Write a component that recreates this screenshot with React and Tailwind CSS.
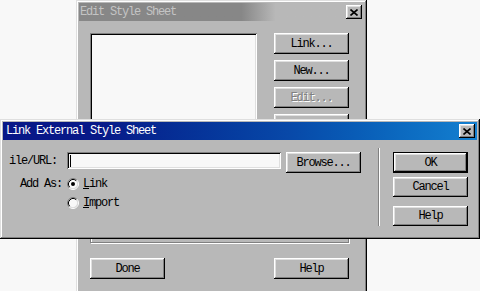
import React from "react";

const Btn = ({children, className = "", disabled, isDefault}) => (
    <div
        className={(isDefault
            ? "border border-black shadow-[inset_-1px_-1px_0_#000,inset_1px_1px_0_#fff,inset_-2px_-2px_0_#808080,inset_2px_2px_0_#dfdfdf] "
            : "shadow-[inset_-1px_-1px_0_#000,inset_1px_1px_0_#fff,inset_-2px_-2px_0_#808080,inset_2px_2px_0_#dfdfdf] ")
            + "flex items-center justify-center w-[75px] bg-[#b8b8b8] " + className}>
        <span className={disabled ? "text-[#808080] [text-shadow:1px_1px_0_#fff]" : "text-black"}>{children}</span>
    </div>
);

const CloseBtn = () => (
    <div
        className="w-[16px] h-[14px] flex items-center justify-center bg-[#b8b8b8] shadow-[inset_-1px_-1px_0_#000,inset_1px_1px_0_#fff,inset_-2px_-2px_0_#808080,inset_2px_2px_0_#dfdfdf]">
        <svg width="8" height="7" viewBox="0 0 8 7">
            <path d="M0.5 0.5L7.5 6.5M7.5 0.5L0.5 6.5" stroke="#000" strokeWidth="1.6"/>
        </svg>
    </div>
);

const Radio = ({checked}) => (
    <svg width="12" height="12" viewBox="0 0 12 12">
        <circle cx="6" cy="6" r="4.5" fill="#f8f8f8"/>
        <path d="M2.11 9.89A5.5 5.5 0 0 1 9.89 2.11" stroke="#808080" fill="none"/>
        <path d="M9.89 2.11A5.5 5.5 0 0 1 2.11 9.89" stroke="#fff" fill="none"/>
        <path d="M2.82 9.18A4.5 4.5 0 0 1 9.18 2.82" stroke="#000" fill="none"/>
        <path d="M9.18 2.82A4.5 4.5 0 0 1 2.82 9.18" stroke="#dfdfdf" fill="none"/>
        {checked && <circle cx="6" cy="6" r="2" fill="#000"/>}
    </svg>
);

const App = () => {
    return (
        <div
            className="relative w-[480px] h-[291px] overflow-hidden bg-[#f8f8f8] font-['Liberation_Mono',monospace] text-[12px] tracking-[-1.2px] leading-none">

            {/* Edit Style Sheet (inactive) */}
            <div
                className="absolute left-[76px] top-0 w-[291px] h-[300px] bg-[#b8b8b8] p-[3px] shadow-[inset_-1px_-1px_0_#000,inset_1px_1px_0_#dfdfdf,inset_-2px_-2px_0_#808080,inset_2px_2px_0_#fff]">
                <div
                    className="h-[18px] flex items-center justify-between pl-[1px] pr-[2px] bg-linear-to-r from-[#878787] from-57% to-[#b8b8b8] to-69%">
                    <span className="text-[#c4c4c4]">Edit Style Sheet</span>
                    <CloseBtn/>
                </div>
                <div className="flex flex-col pl-[11px] pt-[12px]">
                    <div className="flex">
                        <div
                            className="w-[167px] h-[102px] bg-[#f8f8f8] shadow-[inset_1px_1px_0_#808080,inset_-1px_-1px_0_#fff,inset_2px_2px_0_#000,inset_-2px_-2px_0_#dfdfdf]"/>
                        <div className="ml-[17px] flex flex-col gap-[6px]">
                            <Btn className="h-[21px]">Link...</Btn>
                            <Btn className="h-[21px]">New...</Btn>
                            <Btn className="h-[21px]" disabled>Edit...</Btn>
                            <Btn className="h-[21px]" disabled>Remove</Btn>
                        </div>
                    </div>
                    <div
                        className="mt-[6px] w-[259px] h-[102px] border border-[#808080] shadow-[inset_1px_1px_0_#fff,1px_1px_0_#fff]"/>
                    <div className="mt-[15px] w-[259px] flex justify-between">
                        <Btn className="h-[21px]">Done</Btn>
                        <Btn className="h-[21px]">Help</Btn>
                    </div>
                </div>
            </div>

            {/* Link External Style Sheet (active) */}
            <div
                className="absolute left-0 top-[119px] w-[480px] h-[120px] bg-[#b8b8b8] p-[3px] shadow-[inset_-1px_-1px_0_#000,inset_1px_1px_0_#dfdfdf,inset_-2px_-2px_0_#808080,inset_2px_2px_0_#fff]">
                <div
                    className="h-[18px] flex items-center justify-between pl-[3px] pr-[2px] bg-linear-to-r from-[#081888] from-20% via-[#0848a8] via-60% to-[#1480d0]">
                    <span className="text-white">Link External Style Sheet</span>
                    <CloseBtn/>
                </div>
                <div className="flex pt-[8px]">
                    <div className="flex flex-col pt-[4px]">
                        <div className="flex items-start">
                            <span className="w-[64px] h-[17px] pl-[6px] flex items-center">ile/URL:</span>
                            <div
                                className="w-[214px] h-[17px] flex items-center bg-[#f8f8f8] shadow-[inset_1px_1px_0_#808080,inset_-1px_-1px_0_#fff,inset_2px_2px_0_#000,inset_-2px_-2px_0_#dfdfdf]">
                                <span className="ml-[3px] w-px h-[12px] bg-black"/>
                            </div>
                            <Btn className="ml-[5px] h-[21px]">Browse...</Btn>
                        </div>
                        <div className="mt-[5px] flex items-center h-[12px]">
                            <span className="w-[64px] pr-[5px] text-right">Add As:</span>
                            <Radio checked/>
                            <span className="ml-[4px]"><span className="underline">L</span>ink</span>
                        </div>
                        <div className="mt-[7px] flex items-center h-[12px] pl-[64px]">
                            <Radio/>
                            <span className="ml-[4px]"><span className="underline">I</span>mport</span>
                        </div>
                    </div>
                    <div className="ml-[17px] w-[2px] h-[78px] border-l border-l-[#808080] border-r border-r-white"/>
                    <div className="ml-[13px] pt-[4px] flex flex-col">
                        <Btn className="h-[21px]" isDefault>OK</Btn>
                        <Btn className="mt-[4px] h-[20px]">Cancel</Btn>
                        <Btn className="mt-[9px] h-[20px]">Help</Btn>
                    </div>
                </div>
            </div>
        </div>
    );
};

export default App;
